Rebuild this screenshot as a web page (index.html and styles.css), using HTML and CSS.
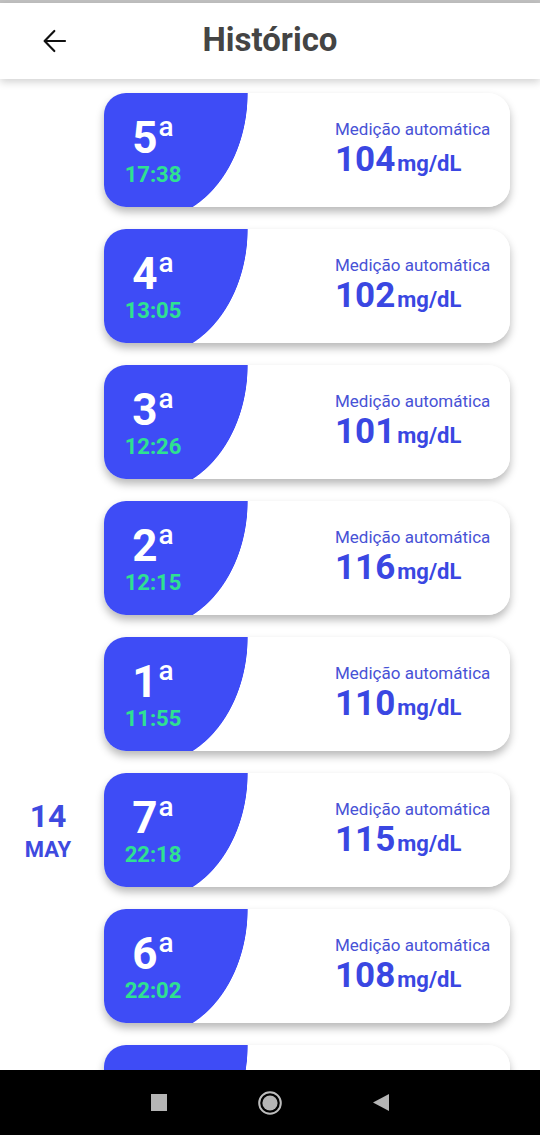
FILE: index.html
```html
<!DOCTYPE html>
<html lang="pt">
<head>
<meta charset="utf-8">
<title>Histórico</title>
<link rel="stylesheet" href="styles.css">
</head>
<body>
<div class="app">
  <div class="status"></div>
  <header class="topbar">
    <div class="back">
      <svg width="32" height="32" viewBox="0 0 24 24" fill="none" stroke="#111" stroke-width="1.6" stroke-linecap="round" stroke-linejoin="round"><path d="M19.5 12H4.6"/><path d="M11.5 4.5L4.2 12l7.3 7.5"/></svg>
    </div>
    <h1 class="title">Histórico</h1>
    <div></div>
  </header>
  <main class="list">
    <div class="row">
      <div class="date"></div>
      <div class="card"><div class="seq"><div class="num">5<span class="ord">a</span></div><div class="time">17:38</div></div><div class="info"><div class="label">Medição automática</div><div class="value">104<span class="unit">mg/dL</span></div></div></div>
    </div>
    <div class="row">
      <div class="date"></div>
      <div class="card"><div class="seq"><div class="num">4<span class="ord">a</span></div><div class="time">13:05</div></div><div class="info"><div class="label">Medição automática</div><div class="value">102<span class="unit">mg/dL</span></div></div></div>
    </div>
    <div class="row">
      <div class="date"></div>
      <div class="card"><div class="seq"><div class="num">3<span class="ord">a</span></div><div class="time">12:26</div></div><div class="info"><div class="label">Medição automática</div><div class="value">101<span class="unit">mg/dL</span></div></div></div>
    </div>
    <div class="row">
      <div class="date"></div>
      <div class="card"><div class="seq"><div class="num">2<span class="ord">a</span></div><div class="time">12:15</div></div><div class="info"><div class="label">Medição automática</div><div class="value">116<span class="unit">mg/dL</span></div></div></div>
    </div>
    <div class="row">
      <div class="date"></div>
      <div class="card"><div class="seq"><div class="num">1<span class="ord">a</span></div><div class="time">11:55</div></div><div class="info"><div class="label">Medição automática</div><div class="value">110<span class="unit">mg/dL</span></div></div></div>
    </div>
    <div class="row">
      <div class="date"><div class="day">14</div><div class="month">MAY</div></div>
      <div class="card"><div class="seq"><div class="num">7<span class="ord">a</span></div><div class="time">22:18</div></div><div class="info"><div class="label">Medição automática</div><div class="value">115<span class="unit">mg/dL</span></div></div></div>
    </div>
    <div class="row">
      <div class="date"></div>
      <div class="card"><div class="seq"><div class="num">6<span class="ord">a</span></div><div class="time">22:02</div></div><div class="info"><div class="label">Medição automática</div><div class="value">108<span class="unit">mg/dL</span></div></div></div>
    </div>
    <div class="row">
      <div class="date"></div>
      <div class="card"></div>
    </div>
  </main>
  <nav class="navbar">
    <span class="nav-square"></span>
    <svg class="nav-home" width="24" height="24" viewBox="0 0 24 24"><circle cx="12" cy="12" r="10.8" fill="none" stroke="#bdbdbd" stroke-width="2"/><circle cx="12" cy="12" r="7.6" fill="#b5b5b5"/></svg>
    <svg class="nav-back" width="16" height="17" viewBox="0 0 16 17"><path d="M16 0V17L0 8.5Z" fill="#b5b5b5"/></svg>
  </nav>
</div>
</body>
</html>
```

FILE: styles.css
```css
* { box-sizing: border-box; }
html, body { margin: 0; padding: 0; }
body {
  font-family: Roboto, "Noto Sans", "Liberation Sans", sans-serif;
  background: #fff;
}
.app {
  width: 540px;
  height: 1135px;
  display: flex;
  flex-direction: column;
  overflow: hidden;
}
.status {
  height: 3px;
  background: #c2c2c2;
  flex: none;
}
.topbar {
  flex: none;
  height: 76px;
  background: #fff;
  display: grid;
  grid-template-columns: 1fr auto 1fr;
  align-items: center;
  box-shadow: 0 3px 8px rgba(0,0,0,0.18);
  position: relative;
  z-index: 2;
}
.back {
  padding-left: 39px;
  display: flex;
  align-items: center;
  height: 32px;
}
.back svg { display: block; }
.title {
  margin: 0;
  font-size: 33px;
  line-height: 40px;
  font-weight: 700;
  color: #444;
  padding-bottom: 2px;
}
.list {
  flex: 1;
  overflow: hidden;
  padding-top: 14px;
  display: flex;
  flex-direction: column;
  gap: 22px;
}
.row {
  display: grid;
  grid-template-columns: 104px 406px;
  flex: none;
}
.date {
  padding-right: 8px;
  padding-top: 27px;
  text-align: center;
  color: #3e4ae0;
  font-weight: 700;
}
.day {
  font-size: 32px;
  line-height: 32px;
}
.month {
  font-size: 22px;
  line-height: 22px;
  margin-top: 7px;
}
.card {
  height: 114px;
  border-radius: 22px;
  background: radial-gradient(100px 128px at 44px 0, #3e4cf6 99.3%, #fff 100%);
  box-shadow: 0 5px 8px rgba(0,0,0,0.28);
  display: flex;
}
.seq {
  width: 98px;
  flex: none;
  padding-top: 23px;
  display: flex;
  flex-direction: column;
  align-items: center;
}
.num {
  display: flex;
  align-items: flex-start;
  color: #fff;
  font-weight: 700;
  font-size: 44px;
  line-height: 44px;
}
.ord {
  font-size: 28px;
  line-height: 28px;
  font-weight: 500;
  margin-top: -3px;
  margin-left: 1px;
}
.time {
  margin-top: 4px;
  color: #2fe191;
  font-weight: 700;
  font-size: 22px;
  line-height: 22px;
}
.info {
  margin-left: 133px;
  padding-top: 26px;
  display: flex;
  flex-direction: column;
}
.label {
  font-size: 17px;
  line-height: 20px;
  color: #4852d6;
  white-space: nowrap;
}
.value {
  margin-top: 3px;
  font-size: 35px;
  line-height: 36px;
  font-weight: 700;
  color: #3a47e2;
  white-space: nowrap;
}
.unit {
  font-size: 22px;
  margin-left: 2px;
}
.navbar {
  flex: none;
  height: 65px;
  background: #000;
  display: flex;
  align-items: center;
  justify-content: center;
  gap: 91px;
  position: relative;
  z-index: 2;
}
.nav-square {
  width: 16px;
  height: 17px;
  background: #b5b5b5;
}
.nav-home, .nav-back { display: block; }
```
